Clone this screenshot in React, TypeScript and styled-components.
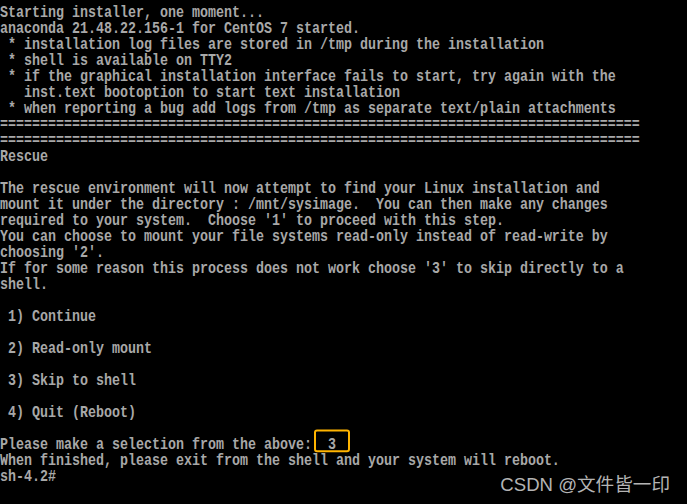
import React from "react";
import styled, { createGlobalStyle } from "styled-components";

const GlobalStyle = createGlobalStyle`
  html, body {
    margin: 0;
    padding: 0;
    background: #000;
  }
  #root {
    width: 687px;
    height: 504px;
    overflow: hidden;
  }
`;

const Screen = styled.div`
  position: relative;
  width: 687px;
  height: 504px;
  background: #000;
  padding-top: 5px;
  box-sizing: border-box;
  display: flex;
  flex-direction: column;
`;

const Line = styled.div`
  position: relative;
  height: 16px;
  line-height: 16px;
  white-space: pre;
  font-family: "Liberation Mono", "DejaVu Sans Mono", monospace;
  font-size: 13.333px;
  font-weight: bold;
  color: #a8a8a8;
  transform: scaleY(1.18);
  transform-origin: center;
`;

const Highlight = styled.span`
  position: absolute;
  left: 314px;
  top: -7px;
  width: 36px;
  height: 23px;
  border: 2px solid #ffb400;
  border-radius: 3px;
  box-sizing: border-box;
  transform: scaleY(0.847);
  transform-origin: center;
`;

const Watermark = styled.div`
  position: absolute;
  right: 17px;
  bottom: 8px;
  font-family: "Liberation Sans", "Noto Sans CJK SC", sans-serif;
  font-size: 18.6px;
  line-height: 22px;
  color: #b4b4b4;
  white-space: nowrap;
`;

const eq = "=".repeat(80);

const lines: string[] = [
  "Starting installer, one moment...",
  "anaconda 21.48.22.156-1 for CentOS 7 started.",
  " * installation log files are stored in /tmp during the installation",
  " * shell is available on TTY2",
  " * if the graphical installation interface fails to start, try again with the",
  "   inst.text bootoption to start text installation",
  " * when reporting a bug add logs from /tmp as separate text/plain attachments",
  eq,
  eq,
  "Rescue",
  "",
  "The rescue environment will now attempt to find your Linux installation and",
  "mount it under the directory : /mnt/sysimage.  You can then make any changes",
  "required to your system.  Choose '1' to proceed with this step.",
  "You can choose to mount your file systems read-only instead of read-write by",
  "choosing '2'.",
  "If for some reason this process does not work choose '3' to skip directly to a",
  "shell.",
  "",
  " 1) Continue",
  "",
  " 2) Read-only mount",
  "",
  " 3) Skip to shell",
  "",
  " 4) Quit (Reboot)",
  "",
  "Please make a selection from the above:  3",
  "When finished, please exit from the shell and your system will reboot.",
  "sh-4.2#",
];

export default function App() {
  return (
    <>
      <GlobalStyle />
      <Screen>
        {lines.map((text, i) => (
          <Line key={i}>
            {text}
            {i === 27 && <Highlight />}
          </Line>
        ))}
        <Watermark>CSDN @文件皆一印</Watermark>
      </Screen>
    </>
  );
}
